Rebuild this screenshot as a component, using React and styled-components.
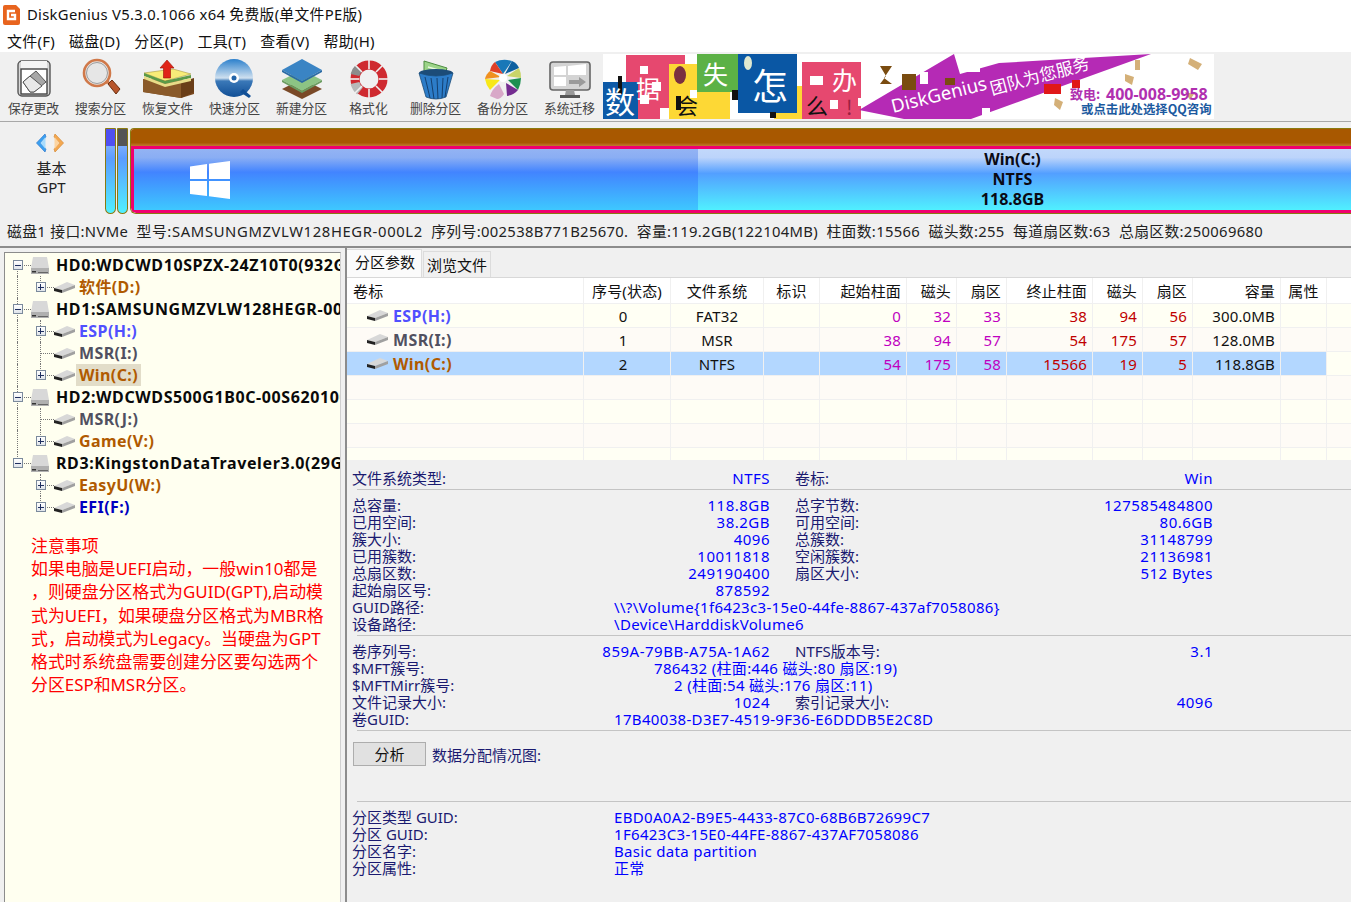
import React from 'react';
import styled, { createGlobalStyle } from 'styled-components';

const uiFont = `"Noto Sans", "Noto Sans CJK SC", sans-serif`;

const Global = createGlobalStyle`
	html, body { margin: 0; padding: 0; background: #f0f0f0; overflow: hidden; }
	body { font-family: ${uiFont}; font-size: 15px; color: #000; }
	* { box-sizing: border-box; }
`;

const Page = styled.div`
	width: 1351px;
	height: 902px;
	overflow: hidden;
	display: flex;
	flex-direction: column;
`;

/* title + menu */
const TitleBar = styled.div`
	height: 30px;
	background: #fff;
	display: flex;
	align-items: center;
	padding: 0 0 1px 3px;
	gap: 7px;
	font-size: 14.8px;
	letter-spacing: .3px;
	color: #111;
	span { margin-top: -2px; }
`;
const MenuBar = styled.div`
	height: 22px;
	background: #fff;
	display: flex;
	align-items: center;
	padding: 0 0 2px 7px;
	gap: 14px;
	font-size: 15px;
	letter-spacing: .25px;
	color: #111;
`;

/* toolbar */
const ToolBar = styled.div`
	height: 70px;
	background: #f0f0f0;
	display: flex;
	border-bottom: 1px solid #a8a8a8;
`;
const Tools = styled.div`
	display: flex;
	width: 603px;
`;
const Tool = styled.div`
	width: 67.5px;
	display: flex;
	flex-direction: column;
	align-items: center;
	padding-top: 6px;
	font-size: 12.8px;
	line-height: 16px;
	color: #444;
	white-space: nowrap;
	svg { height: 42px; }
`;
const Banner = styled.div`
	width: 611px;
	height: 65px;
	margin-top: 2px;
	background: #fff;
	overflow: hidden;
`;

/* disk bar */
const DiskBar = styled.div`
	height: 97px;
	display: flex;
	padding-top: 6px;
	background: #f0f0f0;
`;
const DiskKind = styled.div`
	width: 105px;
	padding: 1px 2px 0 0;
	display: flex;
	flex-direction: column;
	align-items: center;
	font-size: 15px;
	line-height: 19px;
	color: #222;
	svg { margin: 4px 3px 6px 0; }
`;
const SmallPart = styled.div`
	width: 11px;
	height: 86px;
	margin-right: 1px;
	border: 1px solid #8a7a10;
	border-radius: 1px 1px 6px 6px;
	overflow: hidden;
	background: linear-gradient(#a8c4f8 0, #5c9cff 35%, #50f0ff 100%);
	&::before {
		content: '';
		display: block;
		height: 17px;
		background: ${props => props.$cap};
	}
`;
const MainPart = styled.div`
	flex: 1;
	height: 86px;
	margin-left: 1px;
	border: 1px solid #8a7a10;
	border-right: 0;
	border-radius: 4px 0 0 6px;
	overflow: hidden;
	display: flex;
	flex-direction: column;
`;
const PartCap = styled.div`
	height: 17px;
	background: linear-gradient(#a85800 0, #a85800 80%, #c07a30 100%);
`;
const PartBody = styled.div`
	flex: 1;
	display: flex;
	border: 3px solid #f0006e;
	border-right: 0;
	border-radius: 0 0 0 5px;
`;
const UsedPart = styled.div`
	width: 564px;
	display: flex;
	align-items: center;
	padding-left: 56px;
	background: linear-gradient(#93b3f3 0, #8aaef4 14%, #4284ff 38%, #3ec8ff 100%);
`;
const FreePart = styled.div`
	flex: 1;
	display: flex;
	flex-direction: column;
	align-items: center;
	padding: 0 24px 0 0;
	font-weight: 700;
	font-size: 16px;
	line-height: 20px;
	background: linear-gradient(#c2d8fb 0, #bcd4fb 14%, #539fff 40%, #50f0ff 100%);
	color: #0a0a14;
`;
const DiskInfo = styled.div`
	height: 29px;
	padding: 1px 0 0 7px;
	font-size: 14.8px;
	letter-spacing: .34px;
	line-height: 22px;
	color: #222;
	white-space: pre;
	border-bottom: 2px solid #8c8c8c;
	background: #f0f0f0;
`;
const ModelText = styled.span`
	letter-spacing: .64px;
`;

/* main */
const Main = styled.div`
	flex: 1;
	display: flex;
	min-height: 0;
`;
const LeftSide = styled.div`
	width: 345px;
	padding: 4px 4px 0 4px;
	background: #f0f0f0;
`;
const TreePane = styled.div`
	height: 100%;
	border: 1px solid #8c8c8c;
	border-right: 1px solid #d0d0d0;
	border-bottom: 0;
	background: #fffff0;
	overflow: hidden;
	padding: 1px 0 0 1px;
`;
const TreeRow = styled.div`
	height: 22px;
	display: flex;
	align-items: center;
	white-space: nowrap;
`;
const TreeCell = styled.div`
	position: relative;
	width: 23px;
	height: 22px;
	flex: none;
	display: flex;
	align-items: center;
	justify-content: center;
	&::before {
		content: '';
		display: ${props => (props.$line ? 'block' : 'none')};
		position: absolute;
		left: 11px;
		top: ${props => (props.$line === 'down' ? '11px' : '0')};
		height: ${props => (props.$line === 'up' ? '11px' : props.$line === 'down' ? '11px' : '22px')};
		border-left: 1px dotted #777;
	}
	&::after {
		content: '';
		display: ${props => (props.$arm ? 'block' : 'none')};
		position: absolute;
		left: 11px;
		width: 14px;
		top: 11px;
		border-top: 1px dotted #777;
	}
`;
const ExpandBox = styled.span`
	position: relative;
	z-index: 1;
	width: 10px;
	height: 10px;
	border: 1px solid #7b8a9c;
	background: linear-gradient(#fff, #dfe4ea);
	font-size: 0;
	&::before {
		content: '';
		position: absolute;
		left: 1px;
		right: 1px;
		top: 3.5px;
		height: 1px;
		background: #203060;
	}
	&::after {
		content: '';
		display: ${props => (props.$open ? 'none' : 'block')};
		position: absolute;
		top: 1px;
		bottom: 1px;
		left: 3.5px;
		width: 1px;
		background: #203060;
	}
`;
const DiskName = styled.span`
	font-weight: 700;
	font-size: 16px;
	letter-spacing: .6px;
	margin-left: 7px;
	color: #0a0a0a;
`;
const VolName = styled.span`
	font-weight: 700;
	font-size: 16px;
	letter-spacing: .4px;
	margin-left: ${props => props.$tight ? '1px' : '4px'};
	padding: ${props => props.$tight ? '0 3px' : '0'};
	line-height: 22px;
	color: ${props => props.$color};
	background: ${props => (props.$selected ? '#e2ddc9' : 'transparent')};
`;
const Notes = styled.div`
	margin: 16px 0 0 25px;
	font-size: 16.9px;
	line-height: 23.2px;
	color: #ff0000;
	white-space: nowrap;
`;

const RightSide = styled.div`
	flex: 1;
	min-width: 0;
	border-left: 2px solid #8c8c8c;
	display: flex;
	flex-direction: column;
	background: #f0f0f0;
`;
const Tabs = styled.div`
	height: 30px;
	padding-top: 2px;
	display: flex;
	align-items: flex-end;
	border-bottom: 1px solid #d8d8d8;
`;
const Tab = styled.div`
	height: ${props => (props.$active ? '28px' : '26px')};
	padding: ${props => (props.$active ? '0 8px' : '0 3px')};
	width: ${props => (props.$active ? '75px' : '68px')};
	margin-left: ${props => (props.$active ? '0' : '1px')};
	font-size: 15px;
	line-height: ${props => (props.$active ? '24px' : '27px')};
	color: #111;
	background: ${props => (props.$active ? '#fbfbfb' : '#f0f0f0')};
	border: 1px solid #dcdcdc;
	border-bottom: 0;
	border-left: ${props => (props.$active ? '0' : '1px solid #dcdcdc')};
	white-space: nowrap;
`;

const colTemplate = '237px 87px 93px 56px 87px 50px 50px 86px 50px 50px 88px 46px 1fr';

const Table = styled.div`
	height: 182px;
	overflow: hidden;
	background: #fffff6;
`;
const Row = styled.div`
	display: grid;
	grid-template-columns: ${colTemplate};
	height: ${props => (props.$head ? '26px' : '24px')};
	background: ${props => (props.$head ? '#fff' : props.$odd ? '#fefbf6' : '#fffff4')};
	border-bottom: 1px solid #f0f0f0;
`;
const Cell = styled.div`
	display: flex;
	align-items: center;
	justify-content: ${props => props.$align || 'center'};
	padding: 0 ${props => (props.$align === 'flex-end' ? '5px' : '6px')} 0 6px;
	padding-right: ${props => (props.$shift ? '14px' : undefined)};
	font-size: 15px;
	letter-spacing: .15px;
	color: ${props => props.$color || '#111'};
	border-right: 1px solid #f0f0f0;
	background: ${props => (props.$selected ? '#b3d7ff' : 'transparent')};
	white-space: nowrap;
`;
const VolCell = styled(Cell)`
	justify-content: flex-start;
	padding-left: 20px;
	font-weight: 700;
	font-size: 16px;
	letter-spacing: .4px;
	gap: 5px;
`;

const Details = styled.div`
	flex: 1;
	padding: 10px 0 0 5px;
	font-size: 15px;
	line-height: 17px;
	color: #1a1a70;
`;
const DetailRow = styled.div`
	display: flex;
	height: 17px;
	white-space: nowrap;
`;
const Pair = styled.div`
	width: 418px;
	margin-right: 25px;
	display: flex;
	justify-content: space-between;
	flex: none;
`;
const LongLabel = styled.span`
	width: 262px;
	flex: none;
`;
const Value = styled.span`
	color: #0000ff;
	letter-spacing: ${props => (props.$long ? '.33px' : '.5px')};
	margin-left: ${props => props.$indent || 0}px;
`;
const Divider = styled.div`
	height: 1px;
	margin: ${props => props.$top}px 0 ${props => props.$bottom}px 5px;
	background: #c4c4c4;
`;
const AnalyseRow = styled.div`
	height: 24px;
	display: flex;
	align-items: center;
	gap: 6px;
	padding-left: 1px;
`;
const AnalyseButton = styled.div`
	width: 73px;
	height: 24px;
	border: 1px solid #adadad;
	background: #e1e1e1;
	color: #111;
	text-align: center;
	line-height: 22px;
`;
const AnalyseLabel = styled.span`
	margin-top: 3px;
`;

/* --- drawings --- */
const AppIcon = () => (
	<svg width="17" height="20" viewBox="0 0 17 20">
		<path d="M0 2 Q0 0 2 0 H13 L17 4 V18 Q17 20 15 20 H2 Q0 20 0 18Z" fill="#e8641e" />
		<path d="M12 6 H5 V14 H12 V10 H8" fill="none" stroke="#fff" strokeWidth="2.4" />
	</svg>
);

const SaveIcon = () => (
	<svg width="44" height="42" viewBox="0 0 44 42">
		<rect x="6" y="3" width="32" height="35" rx="4" fill="#d8d8d8" stroke="#555" strokeWidth="1.4" />
		<rect x="9" y="3" width="26" height="8" fill="#f4f4f4" />
		<rect x="9" y="11" width="26" height="25" fill="#fff" stroke="#444" strokeWidth="1.4" />
		<path d="M11 24 L24 13 L34 24 L22 34 H18Z" fill="#a8a8a8" stroke="#555" />
		<path d="M18 18 L30 28 L22 34 H18 L11 24Z" fill="#e8e8e8" stroke="#555" />
	</svg>
);
const SearchIcon = () => (
	<svg width="44" height="42" viewBox="0 0 44 42">
		<circle cx="18" cy="15" r="13" fill="#e6e6e6" stroke="#d0794a" strokeWidth="2.6" />
		<circle cx="18" cy="15" r="10.5" fill="none" stroke="#888" strokeWidth=".8" />
		<path d="M27 25 L30 23" stroke="#d0794a" strokeWidth="3" />
		<path d="M29 26 L33 22 L41 31 L37 36Z" fill="#b8562c" stroke="#6a3010" />
	</svg>
);
const RecoverIcon = () => (
	<svg width="54" height="42" viewBox="0 0 54 42">
		<path d="M2 21 L42 22 L53 27 V36 L40 40 L2 34Z" fill="#7b4a20" />
		<path d="M2 21 L40 24 V40 L2 34Z" fill="#8a5a2a" />
		<path d="M40 24 L53 20 V34 L40 40Z" fill="#6a3e18" />
		<path d="M3 15 L32 11 L50 16 L24 23Z" fill="#f8ec78" stroke="#a89a40" strokeWidth=".6" />
		<path d="M3 18 L24 26 L50 20 V17 L24 23 L3 15Z" fill="#5c9a48" />
		<path d="M3 21 L24 29 L50 23 V20 L24 26 L3 18Z" fill="#e8dc88" />
		<path d="M26 2 L33 10 H29.5 V20 H22.5 V10 H19Z" fill="#e02418" stroke="#981008" strokeWidth=".6" />
	</svg>
);
const DiscIcon = () => (
	<svg width="44" height="42" viewBox="0 0 44 42">
		<defs>
			<linearGradient id="disc" x1="0" y1="0" x2="0" y2="1">
				<stop offset="0" stopColor="#2c80cc" />
				<stop offset=".5" stopColor="#cfe0ef" />
				<stop offset=".58" stopColor="#3a78b8" />
				<stop offset="1" stopColor="#114f96" />
			</linearGradient>
		</defs>
		<circle cx="21" cy="20" r="19" fill="url(#disc)" />
		<circle cx="21" cy="20" r="5" fill="#fff" />
		<circle cx="21" cy="20" r="2.5" fill="#2464a8" />
		<path d="M30 31 L38 38 L36 40 L27 34Z" fill="#114f96" />
	</svg>
);
const LayersIcon = () => (
	<svg width="44" height="42" viewBox="0 0 44 42">
		<path d="M22 21 L42 31 L22 41 L2 31Z" fill="#7a4a28" />
		<path d="M22 12 L42 22 L22 33 L2 22Z" fill="#8cc484" />
		<path d="M2 22 L22 33 L42 22 V24 L22 35 L2 24Z" fill="#6a9c60" />
		<path d="M22 1 L42 12 L22 23 L2 12Z" fill="#3a84c4" />
		<path d="M2 12 L22 23 L42 12 V14 L22 25 L2 14Z" fill="#2a6aa4" />
	</svg>
);
const FormatIcon = () => (
	<svg width="44" height="42" viewBox="0 0 44 42">
		<circle cx="22" cy="21" r="14" fill="none" stroke="#cf2a30" strokeWidth="9" />
		<path d="M8 17 A15 15 0 0 1 12 10" fill="none" stroke="#8c8c8c" strokeWidth="9" />
		<path d="M8 25 A15 15 0 0 0 13 33" fill="none" stroke="#b8b8b8" strokeWidth="9" />
		<g stroke="#f0f0f0" strokeWidth="1.6">
			<path d="M22 1 V11" />
			<path d="M22 31 V41" />
			<path d="M2 21 H12" />
			<path d="M32 21 H42" />
			<path d="M8 7 L15 14" />
			<path d="M36 7 L29 14" />
			<path d="M8 35 L15 28" />
			<path d="M36 35 L29 28" />
		</g>
	</svg>
);
const TrashIcon = () => (
	<svg width="44" height="42" viewBox="0 0 44 42">
		<path d="M10 3 L33 10 L29 22 L10 18Z" fill="#9cd488" stroke="#4c8c40" />
		<path d="M14 9 L28 13 M14 13 L27 17" stroke="#e8f8e0" strokeWidth="1.4" />
		<ellipse cx="22" cy="15" rx="17" ry="4" fill="#1c4c78" />
		<path d="M5 15 L12 39 Q22 43 32 39 L39 15 Q22 21 5 15Z" fill="#2c7cc8" stroke="#1c4c78" strokeWidth=".8" />
		<path d="M11 19 L16 40 M17 20 L20 41 M23 20 L24 41 M29 20 L28 40 M34 19 L31 39" stroke="#144070" strokeWidth="1" />
	</svg>
);
const WheelIcon = () => (
	<svg width="44" height="42" viewBox="0 0 44 42">
		<path d="M22 16 L14 4 Q22 0 31 3Z" fill="#1878b8" />
		<path d="M14 4 L22 16 L9 13 Q10 7 14 4Z" fill="#e04028" />
		<path d="M9 13 L20 19 L4 21 Q5 16 9 13Z" fill="#f09020" />
		<path d="M31 3 L24 16 L38 10 Q36 5 31 3Z" fill="#0c60a0" />
		<path d="M38 10 L26 18 L40 20 Q40 14 38 10Z" fill="#c8d468" />
		<path d="M40 20 L27 22 L37 32 Q40 26 40 20Z" fill="#1c9050" />
		<path d="M37 32 L25 25 L26 38 Q33 37 37 32Z" fill="#742c90" />
		<path d="M4 21 L19 22 L9 32 Q5 27 4 21Z" fill="#f8e818" />
		<path d="M18 26 L23 36 Q20 41 16 41 L9 38 Q11 31 18 26Z" fill="#d8a8c8" />
		<circle cx="22" cy="20" r="4" fill="#fff" />
	</svg>
);
const MonitorIcon = () => (
	<svg width="44" height="42" viewBox="0 0 44 42">
		<rect x="2" y="4" width="40" height="28" rx="3" fill="#d4d4d4" stroke="#666" strokeWidth="1.6" />
		<path d="M6 9 L18 8 V17 H6Z M20 8 L38 6 V17 H20Z M6 19 H18 V28 H6Z" fill="#fff" />
		<path d="M21 22 H31 V19 L38 24 L31 29 V26 H21Z" fill="#9a9a9a" />
		<path d="M18 32 H26 L27 37 H17Z" fill="#999" />
		<rect x="12" y="37" width="20" height="3" fill="#555" />
	</svg>
);

const BannerArt = () => (
	<svg width="611" height="65" viewBox="603 54 611 65">
		<rect x="603" y="54" width="611" height="65" fill="#fff" />
		<rect x="626" y="55" width="59" height="64" fill="#e6486f" />
		<rect x="669" y="64" width="28" height="55" fill="#fdd835" />
		<rect x="697" y="54" width="41" height="38" fill="#5cb146" />
		<rect x="697" y="92" width="33" height="27" fill="#fdd835" />
		<rect x="603" y="82" width="35" height="37" fill="#0d5aa7" />
		<rect x="774" y="86" width="59" height="33" fill="#fdd835" />
		<rect x="802" y="62" width="59" height="57" fill="#e6486f" />
		<rect x="738" y="54" width="59" height="59" fill="#0a57a4" />
		<ellipse cx="680" cy="75" rx="6" ry="9" fill="#7a3040" />
		<ellipse cx="748" cy="63" rx="4" ry="7" fill="#dfe8d0" />
		<g fill="#fff">
			<rect x="640" y="66" width="8" height="8" />
			<rect x="652" y="82" width="9" height="9" />
			<rect x="640" y="95" width="9" height="9" />
			<rect x="660" y="108" width="9" height="11" />
			<rect x="690" y="90" width="7" height="8" />
			<rect x="810" y="76" width="13" height="9" />
			<rect x="830" y="100" width="8" height="9" />
			<rect x="858" y="98" width="8" height="8" />
		</g>
		<g fill="#111">
			<rect x="618" y="76" width="4" height="18" />
			<rect x="676" y="96" width="5" height="14" />
			<rect x="732" y="90" width="6" height="10" />
			<rect x="770" y="112" width="6" height="6" />
		</g>
		<text x="605" y="113" fontSize="30" fill="#fff" fontFamily="Noto Sans CJK SC">数</text>
		<text x="636" y="98" fontSize="24" fill="#fff" fontFamily="Noto Sans CJK SC">据</text>
		<text x="703" y="84" fontSize="25" fill="#fff" fontFamily="Noto Sans CJK SC">失</text>
		<text x="752" y="100" fontSize="36" fill="#fff" fontFamily="Noto Sans CJK SC">怎</text>
		<text x="832" y="90" fontSize="25" fill="#fff" fontFamily="Noto Sans CJK SC">办</text>
		<text x="676" y="114" fontSize="22" fill="#111" fontFamily="Noto Sans CJK SC">会</text>
		<text x="806" y="114" fontSize="22" fill="#111" fontFamily="Noto Sans CJK SC">么</text>
		<text x="846" y="115" fontSize="20" fill="#9a2040" fontFamily="Noto Sans CJK SC">!</text>
		<path d="M859 110 L954 54 L960 74 L999 63 L1151 54 L971 119 L904 119Z" fill="#b52ab5" />
		<g fill="#fff">
			<rect x="962" y="54" width="18" height="18" />
			<rect x="920" y="72" width="8" height="12" />
			<rect x="982" y="108" width="8" height="10" />
		</g>
		<g fill="#7a4c10">
			<path d="M880 66 L892 66 L884 78 L892 84 L880 84 L886 76Z" />
			<rect x="902" y="74" width="14" height="16" />
			<rect x="945" y="78" width="10" height="7" />
			<path d="M1135 60 h5 v10 h-5z M1190 58 l12 6 -4 6 -10 -6z" fill="#d4b078" />
			<path d="M1055 98 l8 4 -3 8 -6 -5z M1125 74 l9 3 -2 8 -7 -4z M1185 92 l9 2 -4 6z" fill="#d4b078" />
		</g>
		<text transform="translate(893 113) rotate(-14)" fontSize="18.6" fill="#fff" fontFamily="Noto Sans">DiskGenius</text>
		<text transform="translate(992 95) rotate(-15)" fontSize="17" fill="#fff" fontFamily="Noto Sans CJK SC">团队为您服务</text>
		<rect x="1044" y="84" width="17" height="10" fill="#e01818" />
		<rect x="1072" y="80" width="8" height="8" fill="#e01818" />
		<text x="1070" y="99" fontSize="13" fontWeight="700" fill="#b030b0" fontFamily="Noto Sans CJK SC">致电:</text>
		<text x="1106" y="100" fontSize="16" fontWeight="700" fill="#b030b0" fontFamily="Noto Sans">400-008-9958</text>
		<text x="1081" y="114" fontSize="12.4" fontWeight="700" fill="#1c5aa0" fontFamily="Noto Sans CJK SC">或点击此处选择QQ咨询</text>
	</svg>
);

const ArrowsIcon = () => (
	<svg width="30" height="20" viewBox="0 0 30 20">
		<path d="M10 1 L1.5 10 L10 19 L11 16 L5.5 10 L11 4Z" fill="#3aa0f0" stroke="#3a80d0" strokeWidth=".8" />
		<path d="M10.5 4 L5.5 10 L10.5 16Z" fill="#a8dcfc" />
		<path d="M20 1 L28.5 10 L20 19 L19 16 L24.5 10 L19 4Z" fill="#f4a850" stroke="#d89040" strokeWidth=".8" />
		<path d="M19.5 4 L24.5 10 L19.5 16Z" fill="#fcd4a0" />
	</svg>
);
const WindowsLogo = () => (
	<svg width="40" height="38" viewBox="0 0 40 38">
		<path d="M0 5.5 L17 3 V18 H0Z M19 2.8 L40 0 V18 H19Z M0 20 H17 V35 L0 33Z M19 20 H40 V38 L19 35.2Z" fill="#fff" />
	</svg>
);

const DiskSvg = styled.svg`
	flex: none;
	margin-left: 2px;
`;
const VolSvg = styled.svg`
	flex: none;
	margin-left: ${props => props.$inset || 0}px;
`;

const DiskIcon = () => (
	<DiskSvg width="18" height="17" viewBox="0 0 18 17">
		<path d="M2 0 H16 L18 11 V17 H0 V11Z" fill="#d8d8d8" />
		<rect x="0" y="11" width="18" height="6" fill="#b0b0b0" />
		<rect x="1" y="14" width="4" height="1.5" fill="#333" />
		<rect x="7" y="15" width="10" height="1" fill="#666" />
	</DiskSvg>
);
const VolIcon = ({ inset }) => (
	<VolSvg $inset={inset} width="21" height="11" viewBox="0 0 21 11">
		<path d="M0 6 L13 0 L21 3 L8 8Z" fill="#d8d8d8" />
		<path d="M0 6 L8 8 V11 L0 9Z" fill="#222" />
		<path d="M8 8 L21 3 V6 L8 11Z" fill="#a0a0a0" />
	</VolSvg>
);

const tools = [
	['保存更改', SaveIcon], ['搜索分区', SearchIcon], ['恢复文件', RecoverIcon],
	['快速分区', DiscIcon], ['新建分区', LayersIcon], ['格式化', FormatIcon],
	['删除分区', TrashIcon], ['备份分区', WheelIcon], ['系统迁移', MonitorIcon],
];

const menus = ['文件(F)', '磁盘(D)', '分区(P)', '工具(T)', '查看(V)', '帮助(H)'];

const brown = '#b05a00';
const blue = '#5050ff';
const slate = '#505060';

const tree = [
	{ name: 'HD0:WDCWD10SPZX-24Z10T0(932GB)', line: 'down', vols: [{ name: '软件(D:)', color: brown, box: true }] },
	{ name: 'HD1:SAMSUNGMZVLW128HEGR-000L2', line: 'full', vols: [
		{ name: 'ESP(H:)', color: blue, box: true },
		{ name: 'MSR(I:)', color: slate },
		{ name: 'Win(C:)', color: brown, box: true, selected: true },
	] },
	{ name: 'HD2:WDCWDS500G1B0C-00S6201000', line: 'full', vols: [
		{ name: 'MSR(J:)', color: slate },
		{ name: 'Game(V:)', color: brown, box: true },
	] },
	{ name: 'RD3:KingstonDataTraveler3.0(29GB)', line: 'up', vols: [
		{ name: 'EasyU(W:)', color: brown, box: true },
		{ name: 'EFI(F:)', color: '#0000c0', box: true },
	] },
];

const noteLines = [
	'注意事项',
	'如果电脑是UEFI启动，一般win10都是',
	'，则硬盘分区格式为GUID(GPT),启动模',
	'式为UEFI，如果硬盘分区格式为MBR格',
	'式，启动模式为Legacy。当硬盘为GPT',
	'格式时系统盘需要创建分区要勾选两个',
	'分区ESP和MSR分区。',
];

const headers = [
	['卷标', 'flex-start'], ['序号(状态)'], ['文件系统'], ['标识'], ['起始柱面', 'flex-end'],
	['磁头', 'flex-end'], ['扇区', 'flex-end'], ['终止柱面', 'flex-end'], ['磁头', 'flex-end'],
	['扇区', 'flex-end'], ['容量', 'flex-end'], ['属性'],
];

const partitions = [
	{ name: 'ESP(H:)', color: blue, cells: ['0', 'FAT32', '', '0', '32', '33', '38', '94', '56', '300.0MB'] },
	{ name: 'MSR(I:)', color: slate, cells: ['1', 'MSR', '', '38', '94', '57', '54', '175', '57', '128.0MB'] },
	{ name: 'Win(C:)', color: brown, selected: true, cells: ['2', 'NTFS', '', '54', '175', '58', '15566', '19', '5', '118.8GB'] },
];

const magenta = '#c000c0';
const darkRed = '#c00000';
const cellColors = [null, null, null, magenta, magenta, magenta, darkRed, darkRed, darkRed, null];

const stats = [
	['总容量:', '118.8GB', '总字节数:', '127585484800'],
	['已用空间:', '38.2GB', '可用空间:', '80.6GB'],
	['簇大小:', '4096', '总簇数:', '31148799'],
	['已用簇数:', '10011818', '空闲簇数:', '21136981'],
	['总扇区数:', '249190400', '扇区大小:', '512 Bytes'],
	['起始扇区号:', '878592'],
];

const Twin = ({ row }) => (
	<DetailRow>
		<Pair><span>{row[0]}</span><Value>{row[1]}</Value></Pair>
		{row[2] && <Pair><span>{row[2]}</span><Value>{row[3]}</Value></Pair>}
	</DetailRow>
);

const Long = ({ label, value, indent }) => (
	<DetailRow>
		<LongLabel>{label}</LongLabel>
		<Value $long $indent={indent}>{value}</Value>
	</DetailRow>
);

function App() {
	return (
		<Page>
			<Global />
			<TitleBar><AppIcon /><span>DiskGenius V5.3.0.1066 x64 免费版(单文件PE版)</span></TitleBar>
			<MenuBar>{menus.map(m => <span key={m}>{m}</span>)}</MenuBar>
			<ToolBar>
				<Tools>
					{tools.map(([label, Icon]) => (
						<Tool key={label}><Icon />{label}</Tool>
					))}
				</Tools>
				<Banner><BannerArt /></Banner>
			</ToolBar>
			<DiskBar>
				<DiskKind>
					<ArrowsIcon />
					<span>基本</span>
					<span>GPT</span>
				</DiskKind>
				<SmallPart $cap="#5050f0" />
				<SmallPart $cap="#555" />
				<MainPart>
					<PartCap />
					<PartBody>
						<UsedPart><WindowsLogo /></UsedPart>
						<FreePart>
							<span>Win(C:)</span>
							<span>NTFS</span>
							<span>118.8GB</span>
						</FreePart>
					</PartBody>
				</MainPart>
			</DiskBar>
			<DiskInfo>磁盘1 接口:NVMe  <ModelText>型号:SAMSUNGMZVLW128HEGR-000L2</ModelText>  序列号:002538B771B25670.  容量:119.2GB(122104MB)  柱面数:15566  磁头数:255  每道扇区数:63  总扇区数:250069680</DiskInfo>
			<Main>
				<LeftSide>
					<TreePane>
						{tree.map(disk => (
							<React.Fragment key={disk.name}>
								<TreeRow>
									<TreeCell $line={disk.line} $arm><ExpandBox $open /></TreeCell>
									<DiskIcon />
									<DiskName>{disk.name}</DiskName>
								</TreeRow>
								{disk.vols.map((vol, i) => (
									<TreeRow key={vol.name}>
										<TreeCell $line={disk.line === 'up' ? null : 'full'} />
										<TreeCell $line={i === disk.vols.length - 1 ? 'up' : 'full'} $arm>
											{vol.box && <ExpandBox />}
										</TreeCell>
										<VolIcon inset={2} />
										<VolName $color={vol.color} $selected={vol.selected} $tight={vol.selected}>{vol.name}</VolName>
									</TreeRow>
								))}
							</React.Fragment>
						))}
						<Notes>
							{noteLines.map(line => <div key={line}>{line}</div>)}
						</Notes>
					</TreePane>
				</LeftSide>
				<RightSide>
					<Tabs>
						<Tab $active>分区参数</Tab>
						<Tab>浏览文件</Tab>
					</Tabs>
					<Table>
						<Row $head>
							{headers.map(([h, align], i) => <Cell key={i} $align={align}>{h}</Cell>)}
						</Row>
						{partitions.map((p, r) => (
							<Row key={p.name} $odd={r % 2 === 1}>
								<VolCell $selected={p.selected} $color={p.color}><VolIcon />{p.name}</VolCell>
								{p.cells.map((c, i) => (
									<Cell key={i} $selected={p.selected} $color={cellColors[i]} $shift={i === 0}
										$align={i >= 3 ? 'flex-end' : undefined}>{c}</Cell>
								))}
								<Cell $selected={p.selected} />
							</Row>
						))}
						{[3, 4, 5, 6].map(r => (
							<Row key={r} $odd={r % 2 === 1}>
								{headers.map((h, i) => <Cell key={i} />)}
							</Row>
						))}
					</Table>
					<Details>
						<Twin row={['文件系统类型:', 'NTFS', '卷标:', 'Win']} />
						<Divider $top={2} $bottom={7} />
						{stats.map(row => <Twin key={row[0]} row={row} />)}
						<Long label="GUID路径:" value="\\?\Volume{1f6423c3-15e0-44fe-8867-437af7058086}" />
						<Long label="设备路径:" value="\Device\HarddiskVolume6" />
						<Divider $top={2} $bottom={7} />
						<Twin row={['卷序列号:', '859A-79BB-A75A-1A62', 'NTFS版本号:', '3.1']} />
						<Long label="$MFT簇号:" value="786432 (柱面:446 磁头:80 扇区:19)" indent={40} />
						<Long label="$MFTMirr簇号:" value="2 (柱面:54 磁头:176 扇区:11)" indent={60} />
						<Twin row={['文件记录大小:', '1024', '索引记录大小:', '4096']} />
						<Long label="卷GUID:" value="17B40038-D3E7-4519-9F36-E6DDDB5E2C8D" />
						<Divider $top={2} $bottom={11} />
						<AnalyseRow>
							<AnalyseButton>分析</AnalyseButton>
							<AnalyseLabel>数据分配情况图:</AnalyseLabel>
						</AnalyseRow>
						<Divider $top={35} $bottom={7} />
						<Long label="分区类型 GUID:" value="EBD0A0A2-B9E5-4433-87C0-68B6B72699C7" />
						<Long label="分区 GUID:" value="1F6423C3-15E0-44FE-8867-437AF7058086" />
						<Long label="分区名字:" value="Basic data partition" />
						<Long label="分区属性:" value="正常" />
					</Details>
				</RightSide>
			</Main>
		</Page>
	);
}

export default App;
